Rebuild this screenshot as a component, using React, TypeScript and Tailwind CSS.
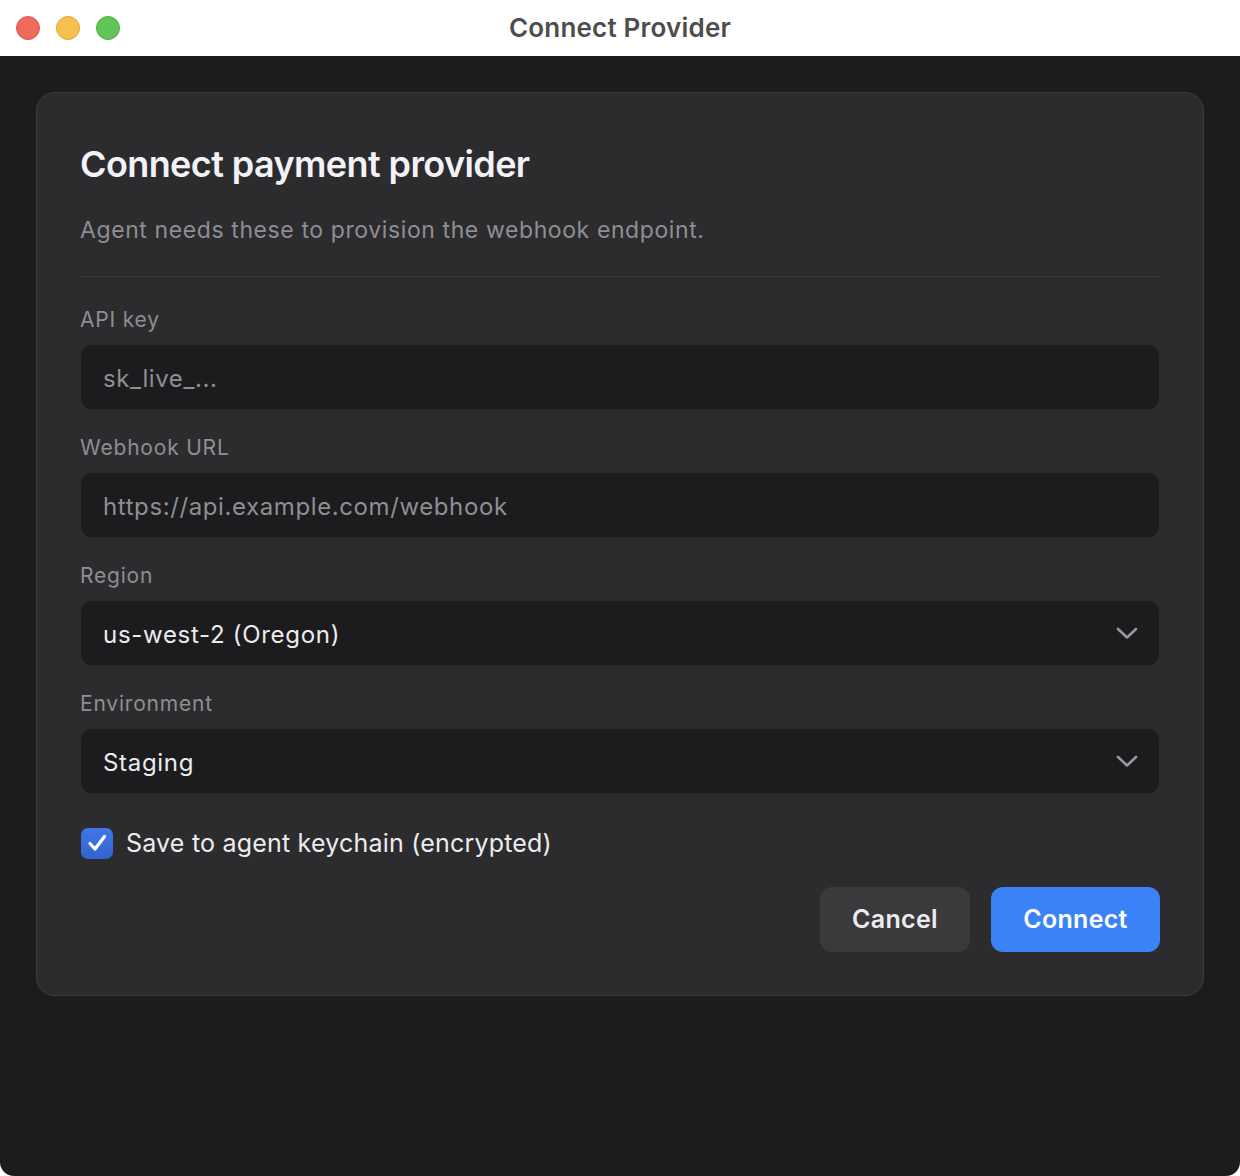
const font = { fontFamily: "Inter, 'Noto Sans', sans-serif" };

function Field({ label, children }: { label: string; children: React.ReactNode }) {
  return (
    <div className="flex flex-col">
      <label className="text-[21px] leading-[28px] tracking-[0.8px] text-[#8e8e93]">{label}</label>
      <div className="mt-[10px]">{children}</div>
    </div>
  );
}

function TextInput({ placeholder }: { placeholder: string }) {
  return (
    <div className="h-[66px] w-full rounded-[12px] bg-[#1c1c1e] border border-[#2a2a2c] flex items-center px-[22px] pt-[3px]">
      <span className="text-[24px] tracking-[0.6px] text-[#8e8e93]">{placeholder}</span>
    </div>
  );
}

function Select({ value }: { value: string }) {
  return (
    <div className="h-[66px] w-full rounded-[12px] bg-[#1c1c1e] border border-[#2a2a2c] flex items-center justify-between pl-[22px] pr-[21px]">
      <span className="text-[24px] tracking-[0.7px] text-[#ececee] pt-[3px]">{value}</span>
      <svg width="22" height="13" viewBox="0 0 22 13" fill="none">
        <path d="M2 2 L11 10.5 L20 2" stroke="#98989d" strokeWidth="2.6" strokeLinecap="round" strokeLinejoin="round" />
      </svg>
    </div>
  );
}

export default function App() {
  return (
    <div className="w-[1240px] h-[1176px] bg-white" style={font}>
      <div className="w-full h-full rounded-[14px] overflow-hidden flex flex-col">
        {/* Title bar */}
        <div className="h-[56px] bg-white relative flex items-center justify-center shrink-0">
          <div className="absolute left-[16px] top-[16px] flex gap-[16px]">
            <div className="w-[24px] h-[24px] rounded-full bg-[#ee6a5f] border border-[#d85a50]" />
            <div className="w-[24px] h-[24px] rounded-full bg-[#f5c04f] border border-[#dba73e]" />
            <div className="w-[24px] h-[24px] rounded-full bg-[#61c554] border border-[#52ad45]" />
          </div>
          <span className="text-[26px] font-semibold tracking-[0.2px] text-[#4d4d4d] -mt-[2px]">Connect Provider</span>
        </div>

        {/* Body */}
        <div className="flex-1 bg-[#1c1c1e] px-[36px] pt-[36px]">
          <div className="rounded-[18px] border border-[#3a3a3c] bg-[#2c2c2e] px-[43px] pt-[49px] pb-[43px] flex flex-col">
            <h1 className="text-[36px] leading-[44px] font-semibold text-[#f2f2f7] tracking-[-0.6px]">
              Connect payment provider
            </h1>
            <p className="mt-[29px] text-[23px] leading-[30px] tracking-[0.6px] text-[#8e8e93]">
              Agent needs these to provision the webhook endpoint.
            </p>
            <div className="mt-[31px] h-px bg-[#3a3a3c]" />

            <div className="mt-[29px] flex flex-col gap-[24px]">
              <Field label="API key">
                <TextInput placeholder="sk_live_..." />
              </Field>
              <Field label="Webhook URL">
                <TextInput placeholder="https://api.example.com/webhook" />
              </Field>
              <Field label="Region">
                <Select value="us-west-2 (Oregon)" />
              </Field>
              <Field label="Environment">
                <Select value="Staging" />
              </Field>
            </div>

            <label className="mt-[32px] flex items-center gap-[13px] pl-[1px]">
              <span className="w-[32px] h-[31px] rounded-[7px] bg-gradient-to-b from-[#4178e6] to-[#3163cf] flex items-center justify-center">
                <svg width="22" height="22" viewBox="0 0 22 22" fill="none">
                  <path d="M4 11.5 L9 17 L18.5 4.5" stroke="white" strokeWidth="3.2" strokeLinecap="round" strokeLinejoin="round" />
                </svg>
              </span>
              <span className="text-[25px] leading-[34px] tracking-[0.2px] text-[#ececee]">Save to agent keychain (encrypted)</span>
            </label>

            <div className="mt-[27px] flex justify-end gap-[21px]">
              <button className="h-[65px] w-[150px] rounded-[12px] bg-[#3a3a3c] text-[25px] font-semibold tracking-[0.3px] text-[#ececee]">
                Cancel
              </button>
              <button className="h-[65px] w-[169px] rounded-[12px] bg-[#3b82f6] text-[25px] font-semibold tracking-[0.3px] text-white">
                Connect
              </button>
            </div>
          </div>
        </div>
      </div>
    </div>
  );
}
